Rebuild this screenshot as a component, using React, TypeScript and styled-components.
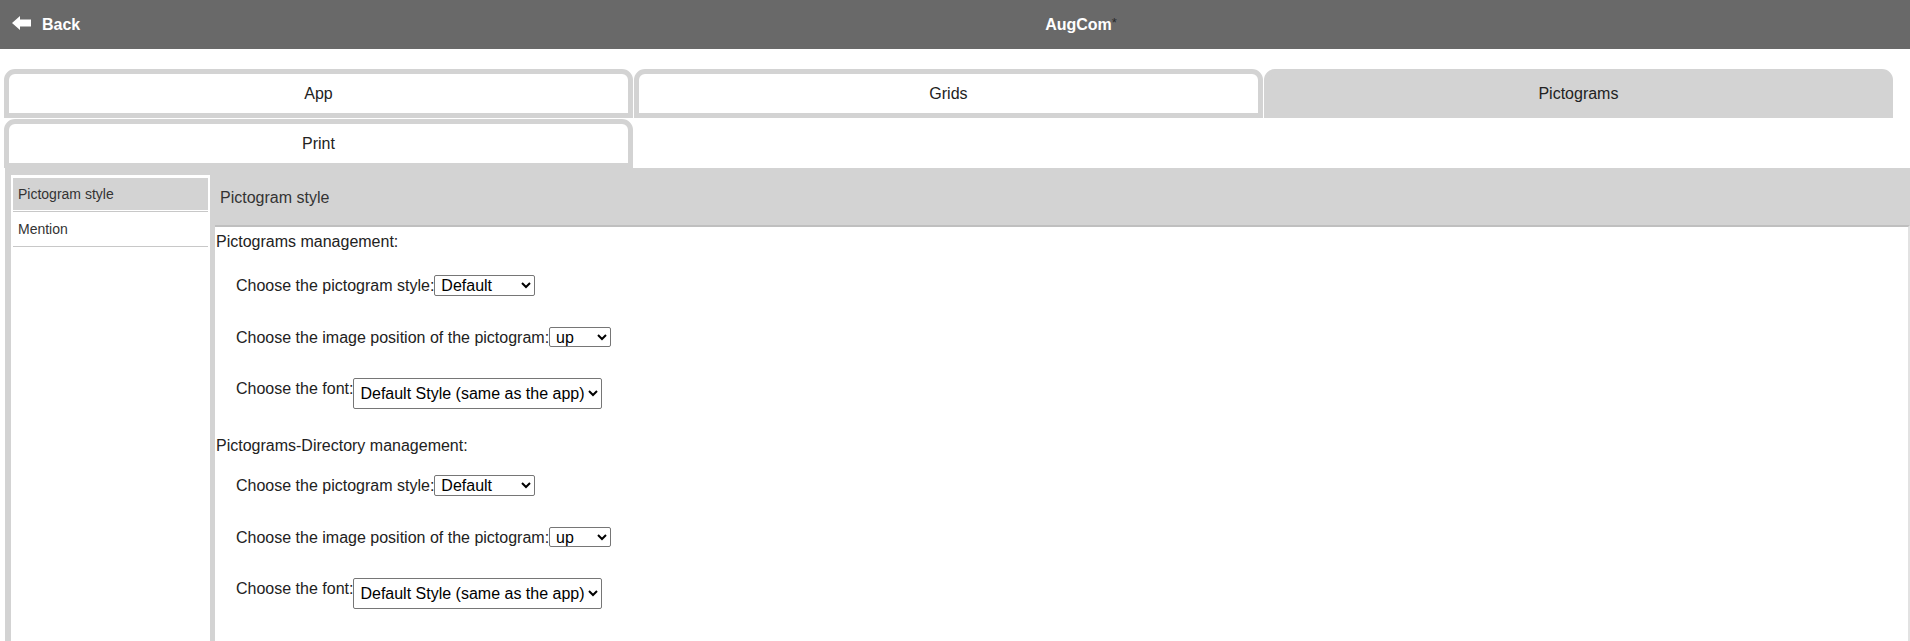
import React from 'react';
import styled, {createGlobalStyle} from 'styled-components';

const GlobalStyle = createGlobalStyle`
  body {
    margin: 0;
    font-family: "Liberation Sans", Arial, sans-serif;
    background: #fff;
    overflow: hidden;
  }
`;

const Header = styled.header`
  height: 49px;
  background-color: #696969;
  display: flex;
  align-items: center;
  color: #fff;
`;
const BackButton = styled.div`
  width: 252px;
  box-sizing: border-box;
  padding-left: 12px;
  display: flex;
  align-items: center;
  gap: 11px;
  font-weight: bold;
  font-size: 16px;
`;
const Title = styled.div`
  flex: 1;
  text-align: center;
  font-weight: bold;
  font-size: 16px;
`;
const Star = styled.span`
  color: #2a2a2a;
  font-size: 13px;
  font-weight: normal;
  vertical-align: 3px;
  line-height: 0;
`;

const TabBar = styled.div`
  margin-top: 20px;
  padding-left: 4px;
  display: flex;
  flex-wrap: wrap;
  row-gap: 1px;
`;
const Tab = styled.div<{active?: boolean}>`
  width: 33%;
  height: 49px;
  box-sizing: border-box;
  margin-right: 1px;
  border: 5px solid #d3d3d3;
  border-radius: 11px 11px 0 0;
  background-color: ${p => (p.active ? '#d3d3d3' : '#fff')};
  display: flex;
  align-items: center;
  justify-content: center;
  font-size: 16px;
  color: #222;
`;

const Body = styled.div`
  margin-left: 5px;
  padding-left: 6px;
  background-color: #d3d3d3;
  display: flex;
  gap: 5px;
`;
const Sidebar = styled.nav`
  width: 199px;
  margin-top: 7px;
  padding: 3px 2px 0;
  box-sizing: border-box;
  background-color: #fff;
`;
const MenuItem = styled.div`
  padding-bottom: 1px;
  border-bottom: 1px solid #c8c8c8;
  margin-bottom: 1px;
`;
const MenuLabel = styled.div<{selected?: boolean}>`
  height: 32px;
  padding-left: 5px;
  display: flex;
  align-items: center;
  font-size: 14px;
  color: #333;
  background-color: ${p => (p.selected ? '#d3d3d3' : '#fff')};
`;

const Content = styled.main`
  flex: 1;
  display: flex;
  flex-direction: column;
`;
const ContentHeader = styled.div`
  height: 57px;
  padding: 3px 0 0 5px;
  box-sizing: border-box;
  display: flex;
  align-items: center;
  font-size: 16px;
  color: #333;
`;
const Panel = styled.div`
  background-color: #fff;
  border-top: 2px solid #bfbfbf;
  border-right: 2px solid #e2e2e2;
  padding: 6px 0 60px 1px;
  color: #222;
`;
const SectionTitle = styled.div<{spaced?: boolean}>`
  font-size: 16px;
  margin-top: ${p => (p.spaced ? '28px' : '0')};
`;
const Row = styled.div<{gapTop: number}>`
  display: flex;
  align-items: flex-start;
  padding-left: 20px;
  margin-top: ${p => p.gapTop}px;
`;
const Label = styled.label`
  font-size: 16px;
  margin-top: 2px;
`;
const Select = styled.select<{w: number; h: number}>`
  width: ${p => p.w}px;
  height: ${p => p.h}px;
  font-family: "Liberation Sans", Arial, sans-serif;
  font-size: 16px;
  color: #000;
  background-color: #fff;
  border: 1px solid #767676;
  border-radius: 2px;
  padding: 0 0 0 2px;
  margin: 0;
`;

const BackArrow = () => (
  <svg width="19" height="14" viewBox="0 0 19 14" fill="#fff" style={{marginTop: -3}}>
    <polygon points="0,7 8,0 8,3.5 19,3.5 19,10.5 8,10.5 8,14" />
  </svg>
);

type Setting = {label: string; options: string[]; w: number; h: number};

const settings: Setting[] = [
  {label: 'Choose the pictogram style:', options: ['Default', 'Rounded'], w: 101, h: 21},
  {label: 'Choose the image position of the pictogram:', options: ['up', 'down'], w: 62, h: 20},
  {label: 'Choose the font:', options: ['Default Style (same as the app)'], w: 249, h: 31},
];

const SettingsGroup = ({title, spaced}: {title: string; spaced?: boolean}) => (
  <>
    <SectionTitle spaced={spaced}>{title}</SectionTitle>
    {settings.map((s, i) => (
      <Row key={s.label} gapTop={i === 0 ? (spaced ? 20 : 24) : 31}>
        <Label>{s.label}</Label>
        <Select w={s.w} h={s.h} defaultValue={s.options[0]}>
          {s.options.map(o => (
            <option key={o}>{o}</option>
          ))}
        </Select>
      </Row>
    ))}
  </>
);

const App: React.FunctionComponent = () => {
  return (
    <>
      <GlobalStyle />
      <Header>
        <BackButton>
          <BackArrow />
          Back
        </BackButton>
        <Title>
          AugCom<Star>*</Star>
        </Title>
      </Header>
      <TabBar>
        <Tab>App</Tab>
        <Tab>Grids</Tab>
        <Tab active>Pictograms</Tab>
        <Tab>Print</Tab>
      </TabBar>
      <Body>
        <Sidebar>
          <MenuItem>
            <MenuLabel selected>Pictogram style</MenuLabel>
          </MenuItem>
          <MenuItem>
            <MenuLabel>Mention</MenuLabel>
          </MenuItem>
        </Sidebar>
        <Content>
          <ContentHeader>Pictogram style</ContentHeader>
          <Panel>
            <SettingsGroup title="Pictograms management:" />
            <SettingsGroup title="Pictograms-Directory management:" spaced />
          </Panel>
        </Content>
      </Body>
    </>
  );
};

export default App;
